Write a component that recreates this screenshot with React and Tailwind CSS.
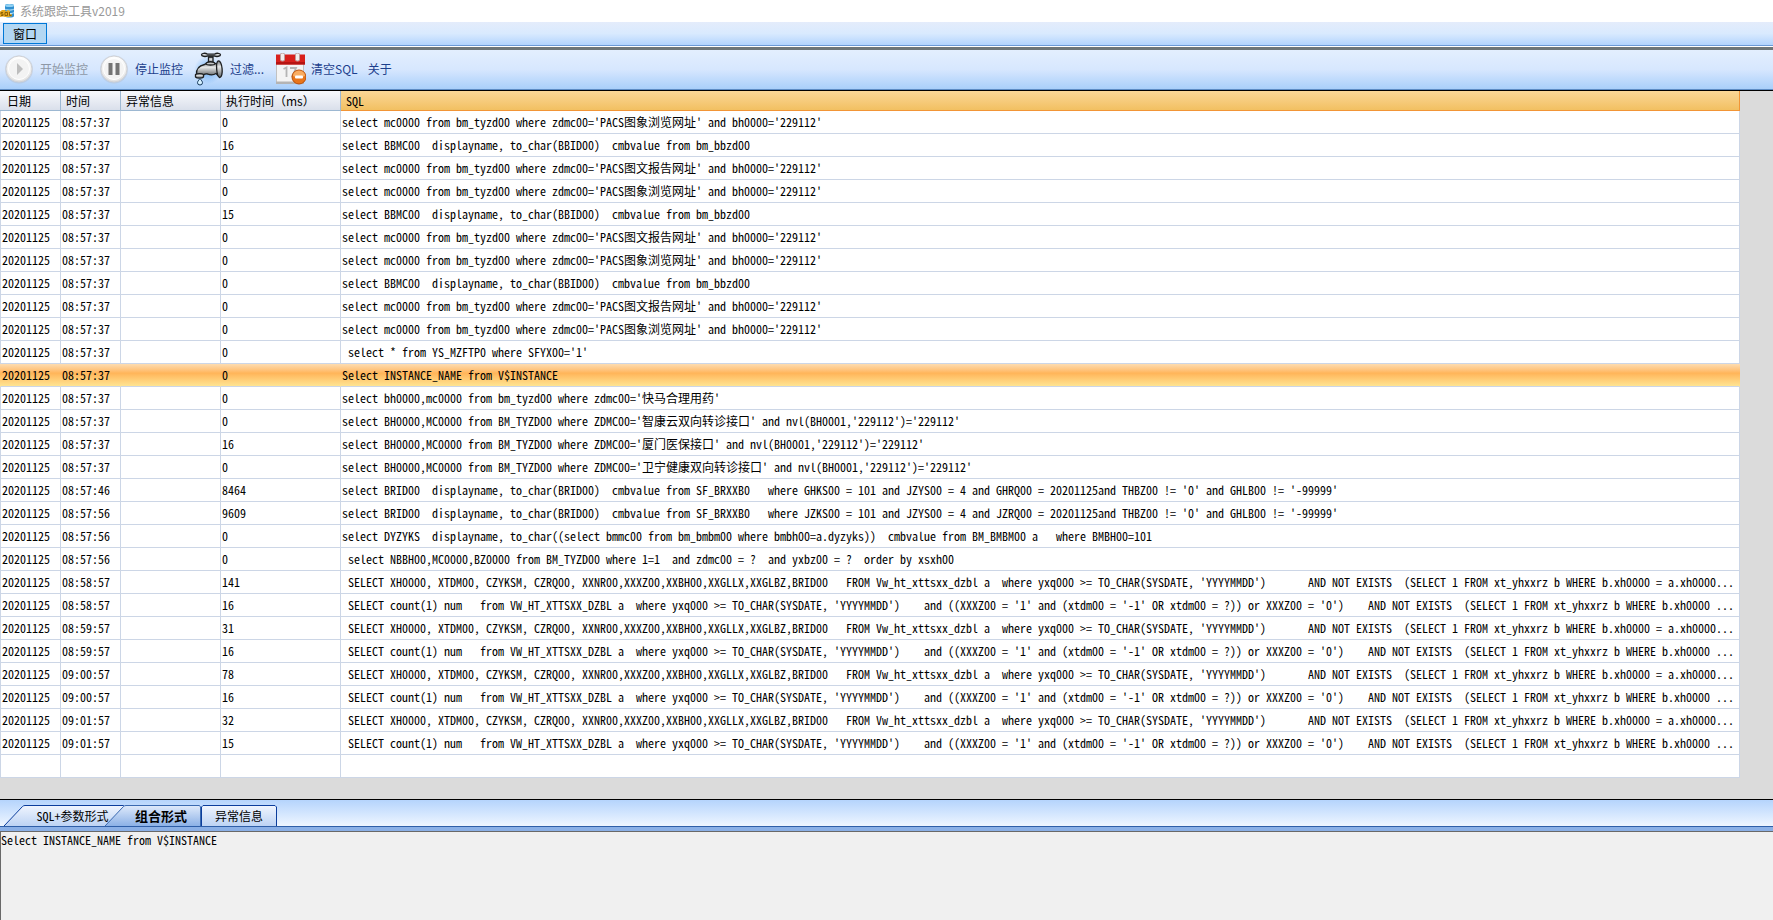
import { useState } from "react";

const PACS_VIEW =
  "select mc0000 from bm_tyzd00 where zdmc00='PACS图象浏览网址' and bh0000='229112'";
const PACS_REPORT =
  "select mc0000 from bm_tyzd00 where zdmc00='PACS图文报告网址' and bh0000='229112'";
const BBZD =
  "select BBMC00  displayname, to_char(BBID00)  cmbvalue from bm_bbzd00";
const MSG_LIST =
  " SELECT XH0000, XTDM00, CZYKSM, CZRQ00, XXNR00,XXXZ00,XXBH00,XXGLLX,XXGLBZ,BRID00   FROM Vw_ht_xttsxx_dzbl a  where yxq000 >= TO_CHAR(SYSDATE, 'YYYYMMDD')       AND NOT EXISTS  (SELECT 1 FROM xt_yhxxrz b WHERE b.xh0000 = a.xh0000...";
const MSG_COUNT =
  " SELECT count(1) num   from VW_HT_XTTSXX_DZBL a  where yxq000 >= TO_CHAR(SYSDATE, 'YYYYMMDD')    and ((XXXZ00 = '1' and (xtdm00 = '-1' OR xtdm00 = ?)) or XXXZ00 = '0')    AND NOT EXISTS  (SELECT 1 FROM xt_yhxxrz b WHERE b.xh0000 ...";

const logs = [
  { time: "08:57:37", cost: 0, sql: PACS_VIEW },
  { time: "08:57:37", cost: 16, sql: BBZD },
  { time: "08:57:37", cost: 0, sql: PACS_REPORT },
  { time: "08:57:37", cost: 0, sql: PACS_VIEW },
  { time: "08:57:37", cost: 15, sql: BBZD },
  { time: "08:57:37", cost: 0, sql: PACS_REPORT },
  { time: "08:57:37", cost: 0, sql: PACS_VIEW },
  { time: "08:57:37", cost: 0, sql: BBZD },
  { time: "08:57:37", cost: 0, sql: PACS_REPORT },
  { time: "08:57:37", cost: 0, sql: PACS_VIEW },
  { time: "08:57:37", cost: 0, sql: " select * from YS_MZFTP0 where SFYX00='1'" },
  { time: "08:57:37", cost: 0, sql: "Select INSTANCE_NAME from V$INSTANCE" },
  {
    time: "08:57:37",
    cost: 0,
    sql: "select bh0000,mc0000 from bm_tyzd00 where zdmc00='快马合理用药'",
  },
  {
    time: "08:57:37",
    cost: 0,
    sql: "select BH0000,MC0000 from BM_TYZD00 where ZDMC00='智康云双向转诊接口' and nvl(BH0001,'229112')='229112'",
  },
  {
    time: "08:57:37",
    cost: 16,
    sql: "select BH0000,MC0000 from BM_TYZD00 where ZDMC00='厦门医保接口' and nvl(BH0001,'229112')='229112'",
  },
  {
    time: "08:57:37",
    cost: 0,
    sql: "select BH0000,MC0000 from BM_TYZD00 where ZDMC00='卫宁健康双向转诊接口' and nvl(BH0001,'229112')='229112'",
  },
  {
    time: "08:57:46",
    cost: 8464,
    sql: "select BRID00  displayname, to_char(BRID00)  cmbvalue from SF_BRXXB0   where GHKS00 = 101 and JZYS00 = 4 and GHRQ00 = 20201125and THBZ00 != '0' and GHLB00 != '-99999'",
  },
  {
    time: "08:57:56",
    cost: 9609,
    sql: "select BRID00  displayname, to_char(BRID00)  cmbvalue from SF_BRXXB0   where JZKS00 = 101 and JZYS00 = 4 and JZRQ00 = 20201125and THBZ00 != '0' and GHLB00 != '-99999'",
  },
  {
    time: "08:57:56",
    cost: 0,
    sql: "select DYZYKS  displayname, to_char((select bmmc00 from bm_bmbm00 where bmbh00=a.dyzyks))  cmbvalue from BM_BMBM00 a   where BMBH00=101",
  },
  {
    time: "08:57:56",
    cost: 0,
    sql: " select NBBH00,MC0000,BZ0000 from BM_TYZD00 where 1=1  and zdmc00 = ?  and yxbz00 = ?  order by xsxh00",
  },
  { time: "08:58:57", cost: 141, sql: MSG_LIST },
  { time: "08:58:57", cost: 16, sql: MSG_COUNT },
  { time: "08:59:57", cost: 31, sql: MSG_LIST },
  { time: "08:59:57", cost: 16, sql: MSG_COUNT },
  { time: "09:00:57", cost: 78, sql: MSG_LIST },
  { time: "09:00:57", cost: 16, sql: MSG_COUNT },
  { time: "09:01:57", cost: 32, sql: MSG_LIST },
  { time: "09:01:57", cost: 15, sql: MSG_COUNT },
];

const tabs = [
  {
    label: "SQL+参数形式",
    box: "-mr-5 w-[121px] pl-4",
    viewBox: "0 0 121 21",
    path: "M0 21L18.500 1.500Q19.500 .5 21 .5H119.500L120.500 2V21",
  },
  {
    label: "组合形式",
    box: "w-24 pl-4",
    viewBox: "0 0 96 21",
    path: "M0 21L18.500 1.500Q19.500 .5 21 .5H94.500L95.500 2V21",
  },
  {
    label: "异常信息",
    box: "w-19",
    viewBox: "0 0 76 21",
    path: "M.5 21V2L2 .5H74L75.500 2V21",
  },
];

function AppIcon() {
  return (
    <svg width="15" height="16" viewBox="0 0 15 16" aria-hidden="true">
      <path d="M5 2.500C5 .6 14 .6 14 2.500V13c0 2-9 2-9 0z" fill="#2f8fd0" />
      <ellipse cx="9.500" cy="2.500" rx="4.500" ry="1.500" fill="#8fd0f2" />
      <path d="M5 6c1 1.400 8 1.400 9 0M5 9.500c1 1.400 8 1.400 9 0" fill="none" stroke="#c9ecfb" />
      <path d="M0 8.500l2-1.500h3l1 1.500 2-1.500 2 1v3l2 .5V13l-3 1H5l-2-.5-3 .5z" fill="#e5a820" />
      <path d="M1 12.500h2V11H1V9.500h2M5 9.500h2.500v3H5zM9.500 9v3.500h2" fill="none" stroke="#7a5200" strokeWidth=".8" />
    </svg>
  );
}

function RoundIcon({ children }) {
  return (
    <svg width="32" height="32" viewBox="0 0 32 32" aria-hidden="true">
      <defs>
        <linearGradient id="disc" x1="0" y1="0" x2="0" y2="1">
          <stop offset="0" stopColor="#ffffff" />
          <stop offset="1" stopColor="#e2e2e2" />
        </linearGradient>
      </defs>
      <circle cx="16" cy="16.500" r="14" fill="#b9bfc9" opacity=".45" />
      <circle cx="16" cy="16" r="13" fill="url(#disc)" stroke="#d0d2d6" />
      <circle cx="16" cy="16" r="10.500" fill="#f3f3f3" stroke="#fff" />
      {children}
    </svg>
  );
}

function FaucetIcon() {
  return (
    <svg width="32" height="34" viewBox="0 0 32 34" aria-hidden="true">
      <defs>
        <linearGradient id="steel" x1="0" y1="0" x2="0" y2="1">
          <stop offset="0" stopColor="#777b7e" />
          <stop offset=".35" stopColor="#e6e8e8" />
          <stop offset="1" stopColor="#5f6467" />
        </linearGradient>
        <radialGradient id="glow">
          <stop offset="0" stopColor="#6fb2f5" />
          <stop offset="1" stopColor="#6fb2f5" stopOpacity="0" />
        </radialGradient>
      </defs>
      <circle cx="15" cy="18" r="14" fill="url(#glow)" />
      <g fill="url(#steel)" stroke="#1d1f20" strokeWidth="1.300" strokeLinejoin="round">
        <path d="M15.500 5h4.500v6h-4.500z" />
        <path d="M3.500 23c-.5-6 3-9.500 8-10.500 3-2.500 9-2.500 12-.5l2-1v13l-2.500-2.500c-3 2-6 1.500-8.500.5-2-.3-4 0-4.500 2z" />
        <path d="M13 12c-.5-3 9.500-3 9 0-1 1.500-8 1.500-9 0z" />
        <path d="M25 9c4.500-1.500 6 17 1.500 16.500C23.500 24 22.500 11 25 9z" />
        <path d="M8.500 2.800c0-1.800 4-2 6-.6h7c2-1.400 6-1.200 6 .6s-4 2.200-6 1.200h-7c-2 1-6 .6-6-1.200z" />
        <path d="M2.500 22.500c2-1.200 6.500-1.200 8 0v2.500c-1.500 1.500-6.500 1.500-8 0z" />
      </g>
      <path d="M7 26.500c1.500 2 2.500 3 2.500 4.200a2.500 2.300 0 0 1-5 0c0-1.200 1-2.200 2.500-4.200z" fill="#d3efff" stroke="#173a5c" />
    </svg>
  );
}

function CalendarIcon() {
  return (
    <svg width="32" height="32" viewBox="0 0 32 32" aria-hidden="true">
      <path d="M2.500 10h27v20.500h-27z" fill="#f4f4f4" stroke="#c2c2c2" />
      <path d="M2 28.500h28V31H2z" fill="#b4b4b4" />
      <path d="M2 1.500h29v10H2z" fill="#d8201c" />
      <path d="M2 9h29v2.500H2z" fill="#b51412" />
      <rect x="6.500" y="0" width="4" height="8" rx="1.500" fill="#f4eded" stroke="#b99c9c" />
      <rect x="21.500" y="0" width="4" height="8" rx="1.500" fill="#f4eded" stroke="#b99c9c" />
      <path d="M9.500 16l3-1.500V24M16 15h6l-4 9" fill="none" stroke="#b5b5b5" strokeWidth="1.800" />
      <circle cx="25" cy="24" r="7" fill="#e8751a" stroke="#b9500b" />
      <path d="M19 23a6 5.500 0 0 1 12 0c-3 1.500-9 1.500-12 0z" fill="#f9ad62" />
      <rect x="21" y="22.500" width="8" height="3" rx="1" fill="#fff" />
    </svg>
  );
}

function ToolButton({ icon, label, disabled }) {
  return (
    <button
      disabled={disabled}
      className="flex items-center gap-[5px] whitespace-nowrap text-[#1c3f8c] disabled:text-[#8e98a6]"
    >
      {icon}
      {label}
    </button>
  );
}

function Tab({ tab, active, onClick }) {
  return (
    <button
      role="tab"
      aria-selected={active}
      onClick={onClick}
      className={`relative h-[21px] whitespace-nowrap ${tab.box}`}
    >
      <svg
        className="absolute inset-0 h-full w-full"
        viewBox={tab.viewBox}
        preserveAspectRatio="none"
        aria-hidden="true"
      >
        <defs>
          <linearGradient id="tabOn" x1="0" y1="0" x2="0" y2="1">
            <stop offset="0" stopColor="#dfeafb" />
            <stop offset="1" stopColor="#8cb1e6" />
          </linearGradient>
          <linearGradient id="tabOff" x1="0" y1="0" x2="0" y2="1">
            <stop offset="0" stopColor="#f0f5fe" />
            <stop offset="1" stopColor="#bdd3f4" />
          </linearGradient>
        </defs>
        <path
          d={tab.path}
          fill={active ? "url(#tabOn)" : "url(#tabOff)"}
          stroke={active ? "#3a69b0" : "#0b3d9c"}
        />
      </svg>
      <span className={active ? "relative text-[13px] font-bold" : "relative"}>
        {tab.label}
      </span>
    </button>
  );
}

const headCell =
  "border-r border-b border-[#9db8d2] pl-[5px] text-left font-normal whitespace-nowrap first:pl-[7px]";
const bodyCell =
  "truncate border-r border-b border-[#ccd6e6] pl-px whitespace-pre first:border-l";

export default function App() {
  const [selected, setSelected] = useState(11);
  const [activeTab, setActiveTab] = useState(1);

  return (
    <div className="flex min-h-screen flex-col bg-[#dbdbdb] font-['Noto_Sans_CJK_SC',sans-serif] text-xs text-black">
      {/* Title bar */}
      <header className="flex h-[22px] items-center gap-[5px] bg-white text-[#999999]">
        <AppIcon />
        <h1>系统跟踪工具v2019</h1>
      </header>

      {/* Menu bar */}
      <nav className="flex h-6 items-center border-b border-[#6c9ad6] bg-linear-to-b from-[#e4ecfb] via-[#d9eafe] to-[#b3d4fd] px-[3px]">
        <button className="h-[21px] w-11 border border-[#0078d7] bg-[#b3d7f3]">窗口</button>
      </nav>

      {/* Toolbar */}
      <div className="border-t border-white bg-[#6f7678]">
        <div className="mt-[3px] flex h-10 items-center gap-2.5 border-b border-[#5d8cc4] bg-linear-to-b from-[#e3effe] via-[#d7e7fe] to-[#a9cffa] px-[3px] pb-0.5">
          <ToolButton
            disabled
            label="开始监控"
            icon={
              <RoundIcon>
                <path d="M14 10l6 6-6 6z" fill="#bdbdbd" />
              </RoundIcon>
            }
          />
          <ToolButton
            label="停止监控"
            icon={
              <RoundIcon>
                <path d="M10.500 10h4v12h-4zM17.500 10h4v12h-4z" fill="#747474" />
              </RoundIcon>
            }
          />
          <ToolButton label="过滤..." icon={<FaucetIcon />} />
          <ToolButton label="清空SQL" icon={<CalendarIcon />} />
          <ToolButton label="关于" />
        </div>
      </div>

      {/* Log grid */}
      <main className="border-t border-black pr-[33px] pb-[21px]">
        <table className="w-full table-fixed border-separate border-spacing-0 bg-white">
          <colgroup>
            <col className="w-[61px]" />
            <col className="w-15" />
            <col className="w-25" />
            <col className="w-30" />
            <col />
          </colgroup>
          <thead>
            <tr className="h-5 bg-linear-to-b from-[#f8f9fc] to-[#d8deea] leading-4">
              <th className={headCell}>日期</th>
              <th className={headCell}>时间</th>
              <th className={headCell}>异常信息</th>
              <th className={headCell}>执行时间（ms）</th>
              <th className="border-r border-b border-[#f29536] bg-linear-to-b from-[#fad796] to-[#f2c061] pl-[5px] text-left font-normal [font-feature-settings:'hwid']">
                SQL
              </th>
            </tr>
          </thead>
          <tbody className="[font-feature-settings:'hwid']">
            {logs.map((log, i) => (
              <tr
                key={i}
                onClick={() => setSelected(i)}
                className={
                  i === selected
                    ? "h-[23px] bg-linear-to-b from-[#fddcb0] via-[#ffb559] via-40% to-[#fee896] leading-4 *:border-r-transparent *:border-l-transparent"
                    : "h-[23px] leading-4"
                }
              >
                <td className={bodyCell}>20201125</td>
                <td className={bodyCell}>{log.time}</td>
                <td className={bodyCell}></td>
                <td className={bodyCell}>{log.cost}</td>
                <td className={bodyCell}>{log.sql}</td>
              </tr>
            ))}
            <tr className="h-[23px]">
              <td className={bodyCell}></td>
              <td className={bodyCell}></td>
              <td className={bodyCell}></td>
              <td className={bodyCell}></td>
              <td className={bodyCell}></td>
            </tr>
          </tbody>
        </table>
      </main>

      {/* Detail tabs */}
      <section className="flex flex-1 flex-col border-t border-black [font-feature-settings:'hwid']">
        <div
          role="tablist"
          className="flex h-[27px] items-end border-b border-[#2f5fa8] bg-linear-to-b from-[#b5d4fc] to-[#eff6ff] pl-1"
        >
          {tabs.map((tab, i) => (
            <Tab
              key={tab.label}
              tab={tab}
              active={i === activeTab}
              onClick={() => setActiveTab(i)}
            />
          ))}
        </div>
        <div className="h-1 bg-[#8bb0e6]"></div>
        <textarea
          readOnly
          aria-label="SQL"
          value={logs[selected].sql}
          className="block w-full flex-1 resize-none border-t border-l border-[#696969] bg-[#f0f0f0] leading-4 outline-none [font-feature-settings:'hwid']"
        />
      </section>
    </div>
  );
}
